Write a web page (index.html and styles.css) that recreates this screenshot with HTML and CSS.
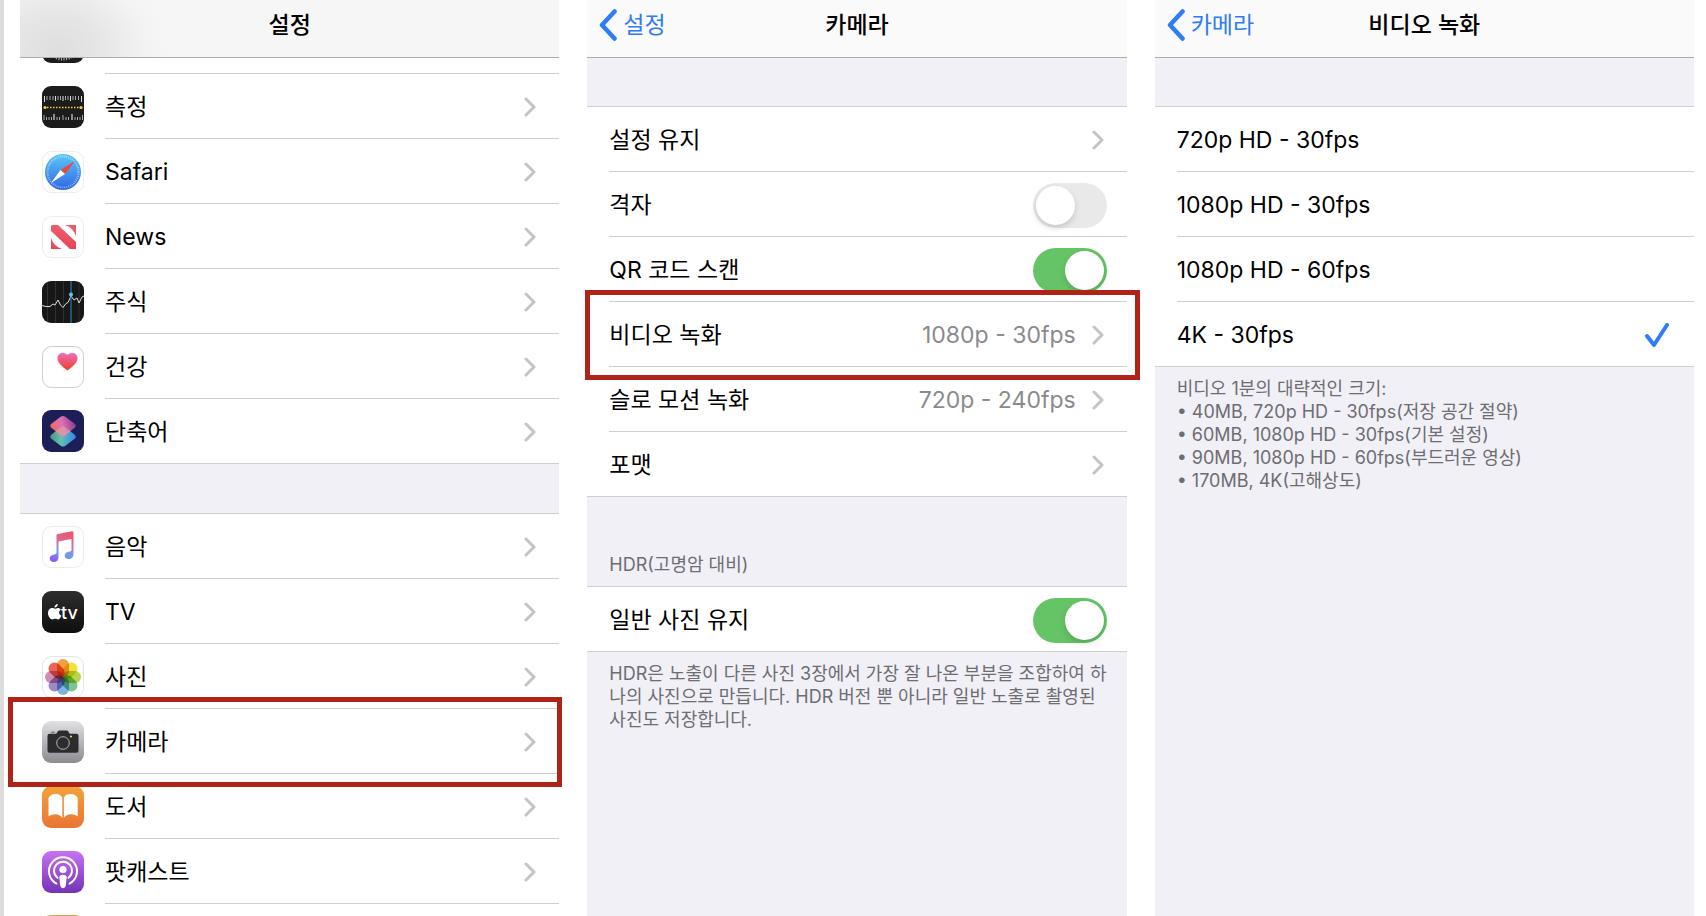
FILE: index.html
```html
<!DOCTYPE html>
<html lang="ko">
<head>
  <meta charset="UTF-8" />
  <meta name="viewport" content="width=device-width, initial-scale=1.0"/>
  <title>비디오 녹화 설정</title>
  <link rel="stylesheet" href="styles.css">
</head>
<body>

<svg class="defs" aria-hidden="true">
  <defs>
    <symbol id="chevron" viewBox="0 0 12 20"><path d="M2 2l8 8-8 8" fill="none" stroke="#c4c4c6" stroke-width="3" stroke-linecap="round" stroke-linejoin="round"/></symbol>
    <symbol id="back" viewBox="0 0 18 32"><path d="M15.500 2.500L3 16l12.500 13.500" fill="none" stroke="#2e7cf6" stroke-width="4.500" stroke-linecap="round" stroke-linejoin="round"/></symbol>
    <linearGradient id="g-safari" x2="0" y2="1"><stop offset="0" stop-color="#5cc8f5"/><stop offset="1" stop-color="#2f66e5"/></linearGradient>
    <linearGradient id="g-heart" x2="0" y2="1"><stop offset="0" stop-color="#ee6cc0"/><stop offset="1" stop-color="#ee4023"/></linearGradient>
    <linearGradient id="g-news" x2="0" y2="1"><stop offset="0" stop-color="#ec5f6b"/><stop offset="1" stop-color="#e9455a"/></linearGradient>
    <linearGradient id="g-top" x1="0" y1=".7" x2="1" y2=".5"><stop offset="0" stop-color="#ee6a4a"/><stop offset=".5" stop-color="#e070b8"/><stop offset="1" stop-color="#8a3f86"/></linearGradient>
    <linearGradient id="g-bottom" x2="1" y2="0"><stop offset="0" stop-color="#4d8f8c"/><stop offset=".4" stop-color="#66c0a8"/><stop offset="1" stop-color="#2f86f6"/></linearGradient>
    <linearGradient id="g-music" x1=".7" y1="0" x2=".4" y2="1"><stop offset="0" stop-color="#f0566a"/><stop offset=".4" stop-color="#d36f9f"/><stop offset=".7" stop-color="#67a2f0"/><stop offset="1" stop-color="#8d5cf6"/></linearGradient>
    <linearGradient id="g-tv" x2="0" y2="1"><stop offset="0" stop-color="#2e2e2e"/><stop offset="1" stop-color="#0e0e0e"/></linearGradient>
    <linearGradient id="g-camera" x2="0" y2="1"><stop offset="0" stop-color="#e0e0e5"/><stop offset="1" stop-color="#8c8b90"/></linearGradient>
    <linearGradient id="g-books" x2="0" y2="1"><stop offset="0" stop-color="#f2a33b"/><stop offset="1" stop-color="#eb7434"/></linearGradient>
    <linearGradient id="g-podcast" x2="0" y2="1"><stop offset="0" stop-color="#c673f3"/><stop offset="1" stop-color="#7433b6"/></linearGradient>
  </defs>
</svg>

<main class="screens">

  <section class="screen">
    <header class="navbar navbar-scrolled">
      <h1>설정</h1>
    </header>
    <nav class="group group-scrolled">
      <a class="row" href="#">
        <svg class="app" viewBox="0 0 42 42"><rect width="42" height="42" rx="9" fill="#1c1c1c"/><circle cx="21" cy="21" r="17" fill="none" stroke="#bbb" stroke-width="3" stroke-dasharray="1 1.5"/></svg>
        <span class="cell"></span>
      </a>
      <a class="row" href="#">
        <svg class="app" viewBox="0 0 42 42">
          <rect width="42" height="42" rx="9" fill="#1c1c1c"/>
          <path d="M5 10v4M8 10v4M11 10v4M16 10v4M18.500 10v4M23.500 10v4M26 10v4M31 10v4M33.500 10v4M36.500 10v4" stroke="#aaa"/>
          <path d="M2.500 10v6M13.500 10v5M21 10v5M28.500 10v5M39.500 10v6" stroke="#ddd"/>
          <path d="M2 34v-5M4.500 34v-3M7 34v-3M9.500 34v-3M15 34v-3M17.500 34v-3M21 34v-5M24 34v-3M26.500 34v-3M33 34v-3M35.500 34v-3M38 34v-3M40.500 34v-5" stroke="#aaa"/>
          <path d="M12 34v-6M30 34v-6" stroke="#fff"/>
          <path d="M5 21.500h33" stroke="#f3cb46" stroke-width="1.500" stroke-dasharray="1.500 1.500"/>
          <circle cx="3" cy="21.500" r="1.600" fill="#f3cb46"/><circle cx="39" cy="21.500" r="1.600" fill="#f3cb46"/>
        </svg>
        <span class="cell">측정<svg class="chevron"><use href="#chevron"/></svg></span>
      </a>
      <a class="row" href="#">
        <svg class="app" viewBox="0 0 42 42">
          <rect x=".5" y=".5" width="41" height="41" rx="9" fill="#fff" stroke="#ececec"/>
          <circle cx="21" cy="21" r="18" fill="url(#g-safari)"/>
          <circle cx="21" cy="21" r="15.500" fill="none" stroke="#fff" stroke-opacity=".55" stroke-width="2" stroke-dasharray=".8 1.200"/>
          <path d="M33 10L18.500 19l4.500 4z" fill="#e8493c"/><path d="M9 32l9.500-13 4.500 4z" fill="#fff"/>
        </svg>
        <span class="cell">Safari<svg class="chevron"><use href="#chevron"/></svg></span>
      </a>
      <a class="row" href="#">
        <svg class="app" viewBox="0 0 42 42">
          <rect x=".5" y=".5" width="41" height="41" rx="9" fill="#fff" stroke="#ececec"/>
          <path d="M10 9h6l18 17v7h-6L9 15v-5zM23 9h11v11a17 17 0 0 0-11-11zM9 22a17 17 0 0 0 11 11H9z" fill="url(#g-news)"/>
        </svg>
        <span class="cell">News<svg class="chevron"><use href="#chevron"/></svg></span>
      </a>
      <a class="row" href="#">
        <svg class="app" viewBox="0 0 42 42">
          <rect width="42" height="42" rx="9" fill="#171717"/>
          <path d="M5.500 1v40M13.500 0v42M21.500 0v42M37 1v40" stroke="#303030"/>
          <path d="M0 24.500l4 1 4 0 3-2.500 2 1 3-5 2.500 5 2.500 2.500 3-4 2-1 3-6.500 3 4 3-2 2 5 3-6 2-1" fill="none" stroke="#ddd" stroke-width="1"/>
          <path d="M29 0v42" stroke="#2b8fc4"/><circle cx="29" cy="13.500" r="2" fill="#5ac8fa"/>
        </svg>
        <span class="cell">주식<svg class="chevron"><use href="#chevron"/></svg></span>
      </a>
      <a class="row" href="#">
        <svg class="app" viewBox="0 0 42 42">
          <rect x=".5" y=".5" width="41" height="41" rx="9" fill="#fff" stroke="#cfcfcf"/>
          <path d="M25.500 24.500C20 20.500 15.500 17 15.500 12.300 15.500 9 17.800 7 20.600 7c2.200 0 4 1 4.900 1.700C26.400 8 28.200 7 30.400 7c2.800 0 5.100 2 5.100 5.300 0 4.700-4.500 8.200-10 12.200z" fill="url(#g-heart)"/>
        </svg>
        <span class="cell">건강<svg class="chevron"><use href="#chevron"/></svg></span>
      </a>
      <a class="row" href="#">
        <svg class="app" viewBox="0 0 42 42">
          <rect width="42" height="42" rx="9" fill="#1b1e57"/>
          <path d="M9 25l10-8q2-1.500 4 0l10 8q1.800 1.800 0 3.500l-10 7.500q-2 1.200-4 0L9 28.500q-1.800-1.800 0-3.500z" fill="url(#g-bottom)"/>
          <path d="M9 14l10-7.500q2-1.200 4 0L33 14q1.800 1.800 0 3.500l-10 8q-2 1.500-4 0l-10-8q-1.800-1.800 0-3.500z" fill="url(#g-top)"/>
          <path d="M13.500 21.500l5.500-4.500q2-1.500 4 0l5.500 4.500-5.500 4q-2 1.500-4 0z" fill="#d9a3a8" fill-opacity=".7"/>
        </svg>
        <span class="cell">단축어<svg class="chevron"><use href="#chevron"/></svg></span>
      </a>
    </nav>
    <nav class="group group-next">
      <a class="row" href="#">
        <svg class="app" viewBox="0 0 42 42">
          <rect x=".5" y=".5" width="41" height="41" rx="9" fill="#fff" stroke="#ececec"/>
          <path d="M14.500 9.500q0-1.300 1.300-1.600L30 5.200q1.500-.2 1.500 1.300V28c0 3-2 5-4.800 5-2.200 0-4-1.200-4-3.400 0-2.600 2.200-3.700 5-4.100 1.200-.2 1.800-.6 1.800-1.800V13L16.500 15.500V31c0 3-2 5-4.600 5-2.400 0-4.200-1.300-4.200-3.500 0-2.500 2-3.700 4.800-4.100 1.300-.2 2-.6 2-1.800z" fill="url(#g-music)"/>
        </svg>
        <span class="cell">음악<svg class="chevron"><use href="#chevron"/></svg></span>
      </a>
      <a class="row" href="#">
        <svg class="app" viewBox="0 0 42 42">
          <rect width="42" height="42" rx="9" fill="url(#g-tv)"/>
          <path d="M15.800 13c.2 1.800-1.500 3.600-3.300 3.600-.2-1.800 1.500-3.500 3.300-3.600zM6 22.200c0-3.400 2.200-5.200 4.300-5.200 1.200 0 1.800.7 2.600.7s1.600-.8 3-.8c1.200 0 2.300.7 3 1.700-2.600 1.600-2.200 5 .5 6.100-.8 2-2 3.700-3.400 3.700-1.100 0-1.500-.7-2.800-.7s-1.700.7-2.700.7C8.300 28.400 6 25.300 6 22.200z" fill="#fff"/>
          <text class="tv-mark" x="19" y="28">tv</text>
        </svg>
        <span class="cell">TV<svg class="chevron"><use href="#chevron"/></svg></span>
      </a>
      <a class="row" href="#">
        <svg class="app petals" viewBox="0 0 42 42">
          <rect x=".5" y=".5" width="41" height="41" rx="9" fill="#fff" stroke="#e4e4e4"/>
          <rect x="15" y="3" width="12" height="18" rx="6" fill="#f0a03c"/>
          <rect x="15" y="3" width="12" height="18" rx="6" fill="#f2e13c" transform="rotate(45 21 21)"/>
          <rect x="15" y="3" width="12" height="18" rx="6" fill="#b8d44e" transform="rotate(90 21 21)"/>
          <rect x="15" y="3" width="12" height="18" rx="6" fill="#7cc494" transform="rotate(135 21 21)"/>
          <rect x="15" y="3" width="12" height="18" rx="6" fill="#7db2e2" transform="rotate(180 21 21)"/>
          <rect x="15" y="3" width="12" height="18" rx="6" fill="#a08ac4" transform="rotate(225 21 21)"/>
          <rect x="15" y="3" width="12" height="18" rx="6" fill="#cf8fb4" transform="rotate(270 21 21)"/>
          <rect x="15" y="3" width="12" height="18" rx="6" fill="#e8655a" transform="rotate(315 21 21)"/>
        </svg>
        <span class="cell">사진<svg class="chevron"><use href="#chevron"/></svg></span>
      </a>
      <a class="row marked marked-left" href="#camera">
        <svg class="app" viewBox="0 0 42 42">
          <rect width="42" height="42" rx="9" fill="url(#g-camera)"/>
          <path d="M9 11.500q0-.8.800-.8h2.400q.8 0 .8.800zM7.500 12.800h6.300c1.200 0 1.600-3.300 3.400-3.300h7.600c1.800 0 2.200 3.300 3.400 3.300h6.300q2 0 2 2v15q0 2-2 2h-27q-2 0-2-2v-15q0-2 2-2z" fill="#2c2c2e"/>
          <circle cx="21" cy="22" r="6.300" fill="none" stroke="#b5b5b5"/><circle cx="29" cy="15.500" r="1.100" fill="#f5cf3c"/>
        </svg>
        <span class="cell">카메라<svg class="chevron"><use href="#chevron"/></svg></span>
      </a>
      <a class="row" href="#">
        <svg class="app" viewBox="0 0 42 42">
          <rect width="42" height="42" rx="9" fill="url(#g-books)"/>
          <path d="M6.500 12c2-3.400 5-4 7.500-4s5 1 6.300 3.500V32c-1.600-2.600-4-3.800-6.800-3.800-3 0-5 .8-7 2.300zM35.700 12c-2-3.400-5-4-7.500-4s-5 1-6.300 3.500V32c1.600-2.600 4-3.800 6.800-3.800 3 0 5 .8 7 2.300z" fill="#fff"/>
        </svg>
        <span class="cell">도서<svg class="chevron"><use href="#chevron"/></svg></span>
      </a>
      <a class="row" href="#">
        <svg class="app" viewBox="0 0 42 42">
          <rect width="42" height="42" rx="9" fill="url(#g-podcast)"/>
          <path d="M14.500 32.600a14 14 0 1 1 13 0M15.500 26.800a9 9 0 1 1 11 0" fill="none" stroke="#fff" stroke-width="1.900" stroke-linecap="round"/>
          <circle cx="21" cy="18.500" r="3.600" fill="#fff"/>
          <path d="M17.300 26.500q0-2.800 3.700-2.800t3.700 2.800l-1 8.300q-.4 2.400-2.700 2.400t-2.700-2.400z" fill="#fff"/>
        </svg>
        <span class="cell">팟캐스트<svg class="chevron"><use href="#chevron"/></svg></span>
      </a>
      <a class="row" href="#">
        <svg class="app" viewBox="0 0 42 42"><rect width="42" height="42" rx="9" fill="#e59f36"/></svg>
        <span class="cell"></span>
      </a>
    </nav>
  </section>

  <section class="screen" id="camera">
    <header class="navbar">
      <a class="back" href="#"><svg><use href="#back"/></svg>설정</a>
      <h1>카메라</h1>
    </header>
    <div class="group group-top">
      <a class="row" href="#"><span class="cell">설정 유지<svg class="chevron"><use href="#chevron"/></svg></span></a>
      <div class="row"><div class="cell"><label for="grid">격자</label><input class="switch" type="checkbox" id="grid"></div></div>
      <div class="row"><div class="cell"><label for="qr">QR 코드 스캔</label><input class="switch" type="checkbox" id="qr" checked></div></div>
      <a class="row marked marked-right" href="#video"><span class="cell">비디오 녹화<span class="value">1080p - 30fps</span><svg class="chevron"><use href="#chevron"/></svg></span></a>
      <a class="row" href="#"><span class="cell">슬로 모션 녹화<span class="value">720p - 240fps</span><svg class="chevron"><use href="#chevron"/></svg></span></a>
      <a class="row" href="#"><span class="cell">포맷<svg class="chevron"><use href="#chevron"/></svg></span></a>
    </div>
    <h2 class="group-title">HDR(고명암 대비)</h2>
    <div class="group">
      <div class="row"><div class="cell"><label for="hdr">일반 사진 유지</label><input class="switch" type="checkbox" id="hdr" checked></div></div>
    </div>
    <p class="note">HDR은 노출이 다른 사진 3장에서 가장 잘 나온 부분을 조합하여 하나의 사진으로 만듭니다. HDR 버전 뿐 아니라 일반 노출로 촬영된 사진도 저장합니다.</p>
  </section>

  <section class="screen" id="video">
    <header class="navbar">
      <a class="back" href="#camera"><svg><use href="#back"/></svg>카메라</a>
      <h1>비디오 녹화</h1>
    </header>
    <div class="group group-top">
      <label class="row"><span class="cell">720p HD - 30fps<input class="option" type="radio" name="format"><svg class="check" viewBox="0 0 24 24"><path d="M2 13l7 9L22 2"/></svg></span></label>
      <label class="row"><span class="cell">1080p HD - 30fps<input class="option" type="radio" name="format"><svg class="check" viewBox="0 0 24 24"><path d="M2 13l7 9L22 2"/></svg></span></label>
      <label class="row"><span class="cell">1080p HD - 60fps<input class="option" type="radio" name="format"><svg class="check" viewBox="0 0 24 24"><path d="M2 13l7 9L22 2"/></svg></span></label>
      <label class="row"><span class="cell">4K - 30fps<input class="option" type="radio" name="format" checked><svg class="check" viewBox="0 0 24 24"><path d="M2 13l7 9L22 2"/></svg></span></label>
    </div>
    <div class="note">
      <p>비디오 1분의 대략적인 크기:</p>
      <ul>
        <li>40MB, 720p HD - 30fps(저장 공간 절약)</li>
        <li>60MB, 1080p HD - 30fps(기본 설정)</li>
        <li>90MB, 1080p HD - 60fps(부드러운 영상)</li>
        <li>170MB, 4K(고해상도)</li>
      </ul>
    </div>
  </section>

</main>

</body>
</html>
```
FILE: styles.css
```css
* { box-sizing: border-box; margin: 0; padding: 0; }
body {
  background: #fff;
  color: #000;
  font-family: Inter, "Noto Sans CJK KR", sans-serif;
  font-size: 23px;
  line-height: 32px;
}
a { color: inherit; text-decoration: none; }
.defs { display: block; width: 0; height: 0; }

.screens {
  display: grid;
  grid-template-columns: repeat(3, 1fr);
  gap: 28px;
  height: 100vh;
  padding: 0 12px 0 16px;
  border-left: 4px solid #dcdcdc;
  overflow: hidden;
}
.screen { min-width: 0; background: #f1f0f6; }

/* nav bar */
.navbar {
  position: relative;
  z-index: 1;
  display: grid;
  grid-template-columns: 1fr auto 1fr;
  align-items: center;
  height: 58px;
  padding: 0 12px 8px;
  background: #fafafb;
  border-bottom: 1px solid #acacae;
}
.navbar-scrolled {
  background: radial-gradient(ellipse 110px 90px at 38px 50px, #dedede, #e6e6e6 40%, #f3f3f3 80%, #f6f6f6);
}
h1 { grid-column: 2; font-size: 23px; font-weight: 500; }
.back { display: flex; align-items: center; gap: 6px; color: #2e7cf6; }
.back svg { width: 18px; height: 32px; }

/* rows */
.group { background: #fff; border-top: 1px solid #cfcfd2; border-bottom: 1px solid #cfcfd2; }
.group-scrolled { margin-top: -49px; border-top: none; }
.group-next { margin-top: 49px; }
.group-top { margin-top: 48px; }
.row {
  position: relative;
  display: flex;
  align-items: center;
  gap: 21px;
  height: 65px;
  padding-left: 22px;
}
.row:last-child { height: 64px; }
.app { flex: none; width: 42px; height: 42px; }
.cell {
  flex: 1;
  align-self: stretch;
  display: flex;
  align-items: center;
  padding: 2px 20px 0 0;
  border-bottom: 1px solid #cfcfd2;
}
.row:last-child .cell { border-bottom: none; }
.chevron { width: 12px; height: 20px; margin: 0 3px 0 auto; }
.value { margin-left: auto; color: #8a8a8e; }
.value + .chevron { margin-left: 16px; }
.tv-mark { fill: #fff; font-size: 18px; font-weight: 500; }
.petals rect + rect { mix-blend-mode: multiply; }
.petals { isolation: isolate; }

.marked::after {
  content: "";
  position: absolute;
  z-index: 2;
  top: -12px;
  bottom: -13px;
  border: 5px solid #b02418;
}
.marked-left::after { left: -12px; right: -3px; }
.marked-right::after { left: -2px; right: -13px; }

/* controls */
.switch {
  appearance: none;
  width: 74px;
  height: 45px;
  margin-left: auto;
  padding: 3px;
  border-radius: 23px;
  background: #e9e9e9;
  cursor: pointer;
}
.switch::before {
  content: "";
  display: block;
  width: 39px;
  height: 39px;
  border-radius: 50%;
  background: #fff;
  box-shadow: 0 3px 6px rgba(0,0,0,0.15);
}
.switch:checked { background: #65c466; }
.switch:checked::before { margin-left: auto; }

.option { appearance: none; width: 0; margin-left: auto; }
.check {
  width: 24px;
  height: 24px;
  margin-right: 5px;
  fill: none;
  stroke: #2e7cf6;
  stroke-width: 4;
  stroke-linecap: round;
  stroke-linejoin: round;
  visibility: hidden;
}
.option:checked + .check { visibility: visible; }

.group-title {
  padding: 56px 22px 10px;
  color: #6d6d72;
  font-size: 18px;
  font-weight: 400;
  line-height: 23px;
}
.note {
  padding: 10px 12px 10px 22px;
  color: #6d6d72;
  font-size: 18px;
  line-height: 23px;
  word-break: break-all;
}
.note ul { list-style: none; }
.note li::before { content: "• "; }
```
